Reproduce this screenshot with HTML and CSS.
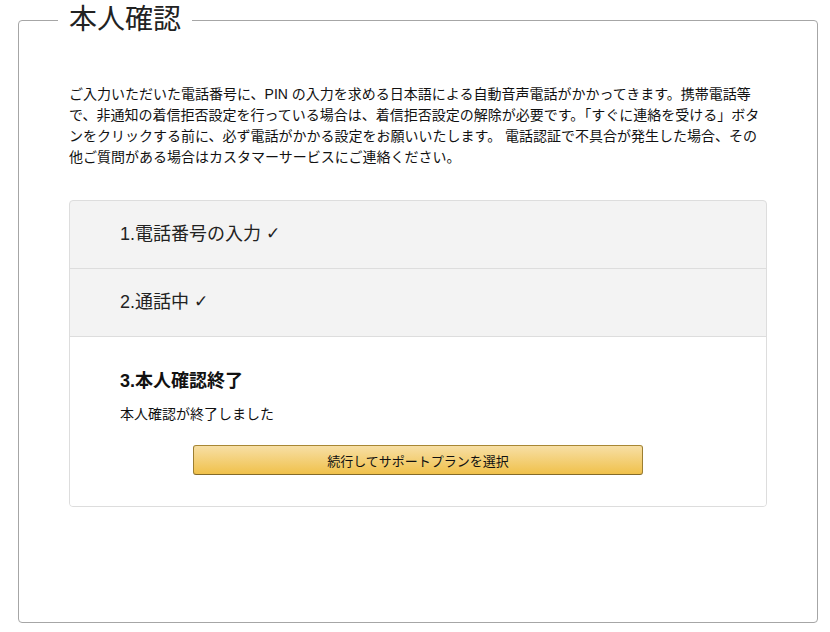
FILE: index.html
```html
<!DOCTYPE html>
<html lang="ja">
<head>
<meta charset="utf-8">
<title>本人確認</title>
<link rel="stylesheet" href="styles.css">
</head>
<body>
<fieldset class="panel">
  <legend class="panel-title">本人確認</legend>
  <p class="intro">ご入力いただいた電話番号に、PIN の入力を求める日本語による自動音声電話がかかってきます。携帯電話等で、非通知の着信拒否設定を行っている場合は、着信拒否設定の解除が必要です。「すぐに連絡を受ける」ボタンをクリックする前に、必ず電話がかかる設定をお願いいたします。 電話認証で不具合が発生した場合、その他ご質問がある場合はカスタマーサービスにご連絡ください。</p>
  <div class="steps">
    <div class="step done">1.電話番号の入力 <span class="check">✓</span></div>
    <div class="step done">2.通話中 <span class="check">✓</span></div>
    <div class="step active">
      <h3 class="step-title">3.本人確認終了</h3>
      <p class="step-text">本人確認が終了しました</p>
      <div class="btn-row">
        <button class="btn-primary" type="button">続行してサポートプランを選択</button>
      </div>
    </div>
  </div>
</fieldset>
</body>
</html>
```
FILE: styles.css
```css
html, body {
  margin: 0;
  padding: 0;
  background: #fff;
}
body {
  font-family: "Liberation Sans", "Noto Sans CJK JP", sans-serif;
  color: #111;
}
.panel {
  box-sizing: border-box;
  width: 800px;
  margin: 0 0 0 18px;
  padding: 0 50px 115px 50px;
  border: 1px solid #a6a6a6;
  border-radius: 4px;
  min-width: 0;
}
.panel-title {
  font-size: 28px;
  line-height: 40px;
  font-weight: normal;
  color: #222;
  padding: 0 11px;
  margin-left: -11px;
}
.intro {
  margin: 44px 0 32px;
  font-size: 14px;
  line-height: 21px;
  color: #111;
}
.steps {
  border: 1px solid #ddd;
  border-radius: 4px;
  background: #f3f3f3;
  overflow: hidden;
}
.step {
  padding: 21px 50px;
  font-size: 18px;
  line-height: 25px;
  height: 25px;
  color: #222;
}
.step + .step {
  border-top: 1px solid #ddd;
}
.check {
  font-family: "DejaVu Sans", sans-serif;
  font-size: 17px;
  line-height: 1;
  vertical-align: 1px;
}
.step.active {
  height: auto;
  background: #fff;
  padding: 32px 50px 31px;
}
.step-title {
  margin: 0;
  font-size: 18px;
  line-height: 24px;
  font-weight: bold;
  color: #111;
}
.step-text {
  margin: 11px 0 20px;
  font-size: 14px;
  line-height: 21px;
  color: #111;
}
.btn-row {
  display: flex;
  justify-content: center;
}
.btn-primary {
  box-sizing: border-box;
  width: 450px;
  height: 30px;
  margin-left: -48px;
  margin-right: -48px;
  border: 1px solid;
  border-color: #a88734 #9c7e31 #846a29;
  border-radius: 3px;
  background: linear-gradient(to bottom, #f7dfa5, #f0c14b);
  font-family: "Liberation Sans", "Noto Sans CJK JP", sans-serif;
  font-size: 13px;
  color: #111;
  padding: 0;
  cursor: pointer;
}
```
